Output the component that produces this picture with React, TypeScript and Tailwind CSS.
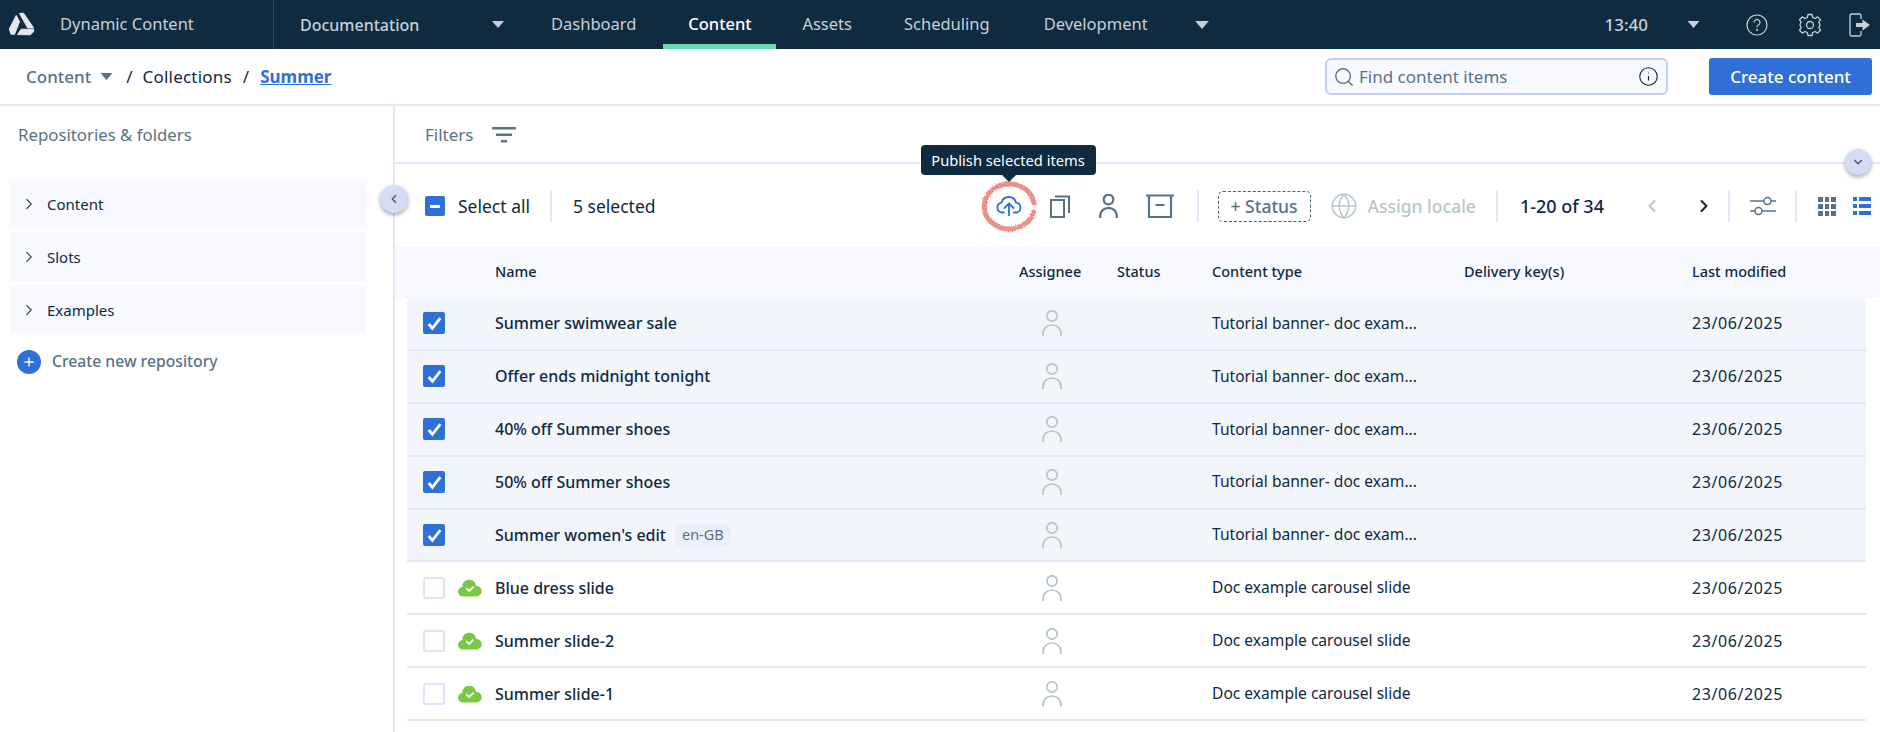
import React from "react";
import { ChevronLeft, ChevronRight, ChevronDown, Search, Info, Globe, Plus } from "lucide-react";

interface Row {
  name: string;
  type: string;
  selected: boolean;
  chip?: string;
}

const rows: Row[] = [
  { name: "Summer swimwear sale", type: "Tutorial banner- doc exam...", selected: true },
  { name: "Offer ends midnight tonight", type: "Tutorial banner- doc exam...", selected: true },
  { name: "40% off Summer shoes", type: "Tutorial banner- doc exam...", selected: true },
  { name: "50% off Summer shoes", type: "Tutorial banner- doc exam...", selected: true },
  { name: "Summer women's edit", type: "Tutorial banner- doc exam...", selected: true, chip: "en-GB" },
  { name: "Blue dress slide", type: "Doc example carousel slide", selected: false },
  { name: "Summer slide-2", type: "Doc example carousel slide", selected: false },
  { name: "Summer slide-1", type: "Doc example carousel slide", selected: false },
];

const Caret = ({ className }: { className: string }) => (
  <svg viewBox="0 0 12 7" className={className} fill="currentColor">
    <path d="M0 0h12L6 7z" />
  </svg>
);

const Logo = () => (
  <svg viewBox="22 18 82 75" className="w-[27px] h-[25px] -mt-[2px]" fill="#e4e9ee" stroke="#e4e9ee" strokeWidth="3" strokeLinejoin="round">
    <path d="M57 25L69 24L100 69L82 69Z" />
    <path d="M47 31L57 50L42 88L31 88L26 72Z" />
    <path d="M51 89L62 73L100 73L100 80L90 90Z" />
  </svg>
);

const PersonIcon = ({ className, stroke }: { className: string; stroke: number }) => (
  <svg viewBox="0 0 20 26" className={className} fill="none" stroke="currentColor" strokeWidth={stroke}>
    <circle cx="10" cy="6" r="5.200" />
    <path d="M1 26v-2.500a9 8.500 0 0 1 18 0V26" />
  </svg>
);

const Cloud = () => (
  <svg viewBox="0 0 24 18" className="w-[24px] h-[18px] ml-[13px]">
    <path fill="#7ac943" d="M5 17.500a4.700 4.700 0 0 1-.6-9.400A6.500 6.500 0 0 1 12 .800a6.500 6.500 0 0 1 6 6.300 5.200 5.200 0 0 1 1 10.400z" />
    <path fill="none" stroke="#fff" strokeWidth="1.800" strokeLinecap="round" strokeLinejoin="round" d="M8.800 9.800l2.300 2.200 4-3.800" />
  </svg>
);

const CheckBox = ({ checked }: { checked: boolean }) =>
  checked ? (
    <span className="w-[22px] h-[22px] rounded-[2px] bg-[#2f6fd8] flex items-center justify-center">
      <svg viewBox="0 0 16 16" className="w-[17px] h-[17px]" fill="none" stroke="#fff" strokeWidth="2.600">
        <path d="M2.500 8.500l3.500 4 7.500-9.500" />
      </svg>
    </span>
  ) : (
    <span className="w-[22px] h-[22px] rounded-[2px] bg-white border-[2px] border-[#dfe4f8]" />
  );

const Divider = ({ className }: { className: string }) => (
  <span className={`block w-[2px] h-[32px] shrink-0 bg-[#e3e8f8] ${className}`} />
);

const grid = "grid grid-cols-[88px_524px_98px_95px_252px_228px_1fr] items-center";

export default function App() {
  return (
    <div className="w-[1880px] h-[732px] overflow-hidden bg-white flex flex-col text-[16px] text-[#10293f] font-['Noto_Sans',sans-serif]">
      {/* Top nav */}
      <header className="h-[49px] bg-[#0f2b40] text-[#c6d0d8] text-[16.500px] flex items-center shrink-0">
        <div className="w-[274px] h-full flex items-center pl-[8px] border-r border-[#34495c]">
          <Logo />
          <span className="ml-[25px]">Dynamic Content</span>
        </div>
        <span className="ml-[26px] font-medium w-[192px] text-[16px]">Documentation</span>
        <Caret className="w-[12px] h-[7px] text-[#c6d0d8]" />
        <nav className="flex h-full ml-[47px]">
          <span className="h-full flex items-center">Dashboard</span>
          <span className="h-full w-[113px] ml-[27px] flex items-center justify-center text-white font-medium border-b-[5px] border-[#66dcb0] pt-[5px]">
            Content
          </span>
          <span className="h-full flex items-center ml-[26px]">Assets</span>
          <span className="h-full flex items-center ml-[52px]">Scheduling</span>
          <span className="h-full flex items-center ml-[54px]">Development</span>
          <span className="h-full flex items-center ml-[47px]">
            <Caret className="w-[14px] h-[8px]" />
          </span>
        </nav>
        <span className="ml-auto font-medium text-[17px]">13:40</span>
        <Caret className="w-[13px] h-[7px] ml-[39px]" />
        <svg viewBox="0 0 22 22" className="w-[22px] h-[22px] ml-[46px]" fill="none" stroke="currentColor" strokeWidth="1.200">
          <circle cx="11" cy="11" r="10" />
          <path d="M8 8.500a3 3 0 1 1 4.500 2.600c-1 .6-1.500 1.200-1.500 2.400" />
          <circle cx="11" cy="16" r=".5" />
        </svg>
        <svg viewBox="0 0 24 24" className="w-[24px] h-[24px] ml-[30px]" fill="none" stroke="currentColor" strokeWidth="1.300" strokeLinejoin="round">
          <circle cx="12" cy="12" r="3.500" />
          <path d="M10 1.500h4l.7 3 2.300 1 2.700-1.600 2.800 2.800L20.900 9.400l1 2.300 .1 .3-.1 .3-1 2.300 1.600 2.700-2.800 2.800-2.700-1.600-2.300 1-.7 3h-4l-.7-3-2.300-1-2.700 1.600-2.800-2.800 1.600-2.700-1-2.300-.1-.6 .1 -.3 1-2.300L1.500 6.700l2.800-2.800L7 5.500l2.300-1z" />
        </svg>
        <svg viewBox="0 0 22 24" className="w-[22px] h-[24px] ml-[27px] mr-[9px]" fill="none" stroke="currentColor" strokeWidth="1.300">
          <path d="M12 6V2.500a1.500 1.500 0 0 0-1.500-1.500H2.500A1.500 1.500 0 0 0 1 2.500v19A1.500 1.500 0 0 0 2.500 23h8a1.500 1.500 0 0 0 1.500-1.500V18" />
          <path fill="currentColor" stroke="none" d="M7 10h6.500V6.500L21 12l-7.500 5.500V14H7z" />
        </svg>
      </header>

      {/* Breadcrumb bar */}
      <div className="h-[57px] shrink-0 flex items-center border-b-[2px] border-[#e3e8f8] pl-[26px] pr-[8px] text-[17px]">
        <span className="text-[#5b7282] font-medium">Content</span>
        <Caret className="w-[13px] h-[7px] text-[#5b7282] ml-[9px]" />
        <span className="ml-[13px]">/</span>
        <span className="ml-[10px] tracking-[0.2px]">Collections</span>
        <span className="ml-[11px]">/</span>
        <span className="ml-[11px] text-[#2f6fd8] font-bold underline">Summer</span>
        <div className="ml-auto w-[343px] h-[37px] rounded-[6px] bg-[#f7f9fe] border-[2px] border-[#c3d0f3] flex items-center pl-[6px] pr-[7px] text-[#5b7282]">
          <Search className="w-[22px] h-[22px]" strokeWidth={1.500} />
          <span className="ml-[4px]">Find content items</span>
          <Info className="w-[21px] h-[21px] ml-auto text-[#10293f]" strokeWidth={1.300} />
        </div>
        <button className="ml-[41px] w-[163px] h-[37px] rounded-[3px] bg-[#2f6fd8] text-white font-medium">
          Create content
        </button>
      </div>

      <div className="flex flex-1 min-h-0">
        {/* Sidebar */}
        <aside className="w-[395px] shrink-0 border-r-[2px] border-[#e3e8f8] relative">
          <div className="h-[58px] flex items-center pl-[18px] text-[#5b7282] text-[16.800px]">Repositories &amp; folders</div>
          <div className="mt-[15px] pl-[9px] pr-[26px] flex flex-col gap-[3px]">
            {["Content", "Slots", "Examples"].map((item) => (
              <div key={item} className="h-[50px] bg-[#f7f9fe] flex items-center pl-[11px] text-[15px]">
                <ChevronRight className="w-[18px] h-[18px] text-[#3a5263]" strokeWidth={1.600} />
                <span className="ml-[9px]">{item}</span>
              </div>
            ))}
          </div>
          <div className="mt-[15px] pl-[17px] flex items-center text-[#5b7282] font-medium text-[15.700px]">
            <span className="w-[24px] h-[24px] rounded-full bg-[#2f6fd8] flex items-center justify-center">
              <Plus className="w-[14px] h-[14px] text-white" strokeWidth={2.500} />
            </span>
            <span className="ml-[11px]">Create new repository</span>
          </div>
          <span className="absolute left-[380px] top-[79px] w-[28px] h-[28px] rounded-full bg-[#d5dcf4] shadow-[0_2px_4px_rgba(15,43,64,0.4)] flex items-center justify-center">
            <ChevronLeft className="w-[14px] h-[14px] text-[#3a5263]" strokeWidth={2} />
          </span>
        </aside>

        {/* Main */}
        <main className="flex-1 min-w-0 flex flex-col relative">
          <div className="h-[58px] shrink-0 flex items-center pl-[30px] pt-[1px] border-b-[2px] border-[#e3e8f8] text-[#5b7282] text-[17px]">
            <span>Filters</span>
            <svg viewBox="0 0 24 16" className="w-[24px] h-[16px] ml-[19px]" fill="currentColor">
              <path d="M0 0h24v2.500H0zM4 6.500h16V9H4zM9 13h6v2.500H9z" />
            </svg>
          </div>

          {/* Toolbar */}
          <div className="h-[82px] shrink-0 flex items-center pl-[30px] pt-[2px] text-[#5b7282] text-[17.500px]">
            <span className="w-[20px] h-[20px] rounded-[2px] bg-[#2f6fd8] flex items-center justify-center shrink-0">
              <span className="w-[10px] h-[3px] bg-white" />
            </span>
            <span className="ml-[13px] text-[#10293f] whitespace-nowrap">Select all</span>
            <Divider className="ml-[20px] h-[26px]" />
            <span className="ml-[21px] text-[#10293f] whitespace-nowrap">5 selected</span>

            {/* Publish icon with ring and tooltip */}
            <span className="relative ml-[340px] w-[26px] h-[20px] shrink-0">
              <svg viewBox="0 0 26 20" className="w-[26px] h-[20px]" fill="none" stroke="#2f6fd8" strokeWidth="1.800" strokeLinecap="round" strokeLinejoin="round">
                <path d="M8 16.500H6a5 5 0 0 1-.5-9.900A7.500 7.500 0 0 1 20 6.600a5 5 0 0 1 .3 9.900H18" />
                <path d="M13 20V8M8.500 12L13 7.500l4.500 4.500" />
              </svg>
              <svg viewBox="0 0 56 50" className="absolute -left-[15px] -top-[14px] w-[56px] h-[50px] overflow-visible" fill="none" stroke="#ea918a" strokeWidth="5" strokeLinecap="round">
                <filter id="rough">
                  <feTurbulence type="fractalNoise" baseFrequency="0.7" numOctaves="2" />
                  <feDisplacementMap in="SourceGraphic" scale="3" />
                </filter>
                <path filter="url(#rough)" d="M53 21A25 22.500 0 1 0 52.500 30" />
              </svg>
              <span className="absolute -left-[75px] -top-[51px] w-[175px] h-[30px] rounded-[4px] bg-[#0f2b40] text-white text-[14.700px] flex items-center justify-center whitespace-nowrap">
                Publish selected items
              </span>
              <span className="absolute left-[6px] -top-[21px] w-0 h-0 border-x-[7px] border-x-transparent border-t-[7px] border-t-[#0f2b40]" />
            </span>

            <svg viewBox="0 0 20 24" className="w-[20px] h-[24px] ml-[28px] shrink-0" fill="none" stroke="currentColor" strokeWidth="2">
              <rect x="1" y="6" width="13" height="17" />
              <path d="M5 2.500h14V19" />
            </svg>
            <PersonIcon className="w-[19px] h-[24px] ml-[29px] shrink-0 text-[#5b7282]" stroke={2.400} />
            <svg viewBox="0 0 28 24" className="w-[28px] h-[24px] ml-[28px] shrink-0" fill="none" stroke="currentColor" strokeWidth="2.200">
              <path d="M0 1.500h28M3 1.500V23h22V1.500M9.500 11h9" />
            </svg>
            <Divider className="ml-[23px]" />
            <span className="ml-[19px] w-[93px] h-[31px] shrink-0 rounded-[5px] border border-dashed border-[#4a5f6e] flex items-center justify-center font-medium whitespace-nowrap">
              + Status
            </span>
            <Globe className="w-[28px] h-[28px] ml-[19px] shrink-0 text-[#b7c6cc]" strokeWidth={1.300} />
            <span className="ml-[10px] font-medium text-[#b7c6cc] whitespace-nowrap">Assign locale</span>
            <Divider className="ml-[20px]" />
            <span className="ml-[22px] font-medium text-[#10293f] whitespace-nowrap text-[18px]">1-20 of 34</span>
            <ChevronLeft className="w-[20px] h-[20px] ml-[38px] shrink-0 text-[#b7c6cc]" strokeWidth={2.500} />
            <ChevronRight className="w-[20px] h-[20px] ml-[32px] shrink-0 text-[#10293f]" strokeWidth={2.500} />
            <Divider className="ml-[14px]" />
            <svg viewBox="0 0 26 20" className="w-[26px] h-[20px] ml-[20px] shrink-0" fill="none" stroke="currentColor" strokeWidth="1.500">
              <path d="M0 5h14M21 5h5M0 15h5M12 15h14" />
              <circle cx="17.500" cy="5" r="3.500" />
              <circle cx="8.500" cy="15" r="3.500" />
            </svg>
            <Divider className="ml-[19px]" />
            <span className="ml-[21px] grid grid-cols-3 gap-[2px] w-[18px] shrink-0">
              {Array.from({ length: 9 }).map((_, i) => (
                <span key={i} className="h-[5px] bg-[#5b7282]" />
              ))}
            </span>
            <span className="ml-[17px] w-[18px] shrink-0 flex flex-col gap-[3px]">
              {[0, 1, 2].map((i) => (
                <span key={i} className="flex gap-[2px] h-[4px]">
                  <span className="w-[4px] bg-[#2f6fd8]" />
                  <span className="flex-1 bg-[#2f6fd8]" />
                </span>
              ))}
            </span>
          </div>

          <span className="absolute right-[9px] top-[43px] w-[26px] h-[26px] rounded-full bg-[#d5dcf4] shadow-[0_2px_4px_rgba(15,43,64,0.4)] flex items-center justify-center">
            <ChevronDown className="w-[14px] h-[14px] text-[#3a5263]" strokeWidth={2} />
          </span>

          {/* Table header */}
          <div className={`h-[52px] shrink-0 bg-[#f7f9fe] pl-[12px] pb-[1px] text-[14.500px] font-medium ${grid}`}>
            <span />
            <span>Name</span>
            <span>Assignee</span>
            <span>Status</span>
            <span>Content type</span>
            <span>Delivery key(s)</span>
            <span>Last modified</span>
          </div>

          {/* Table rows */}
          <div className="ml-[12px] mr-[14px]">
            {rows.map((row) => (
              <div
                key={row.name}
                className={`h-[52.900px] border-b-[2px] border-[#e3e8f8] ${grid} ${row.selected ? "bg-[#f2f6fb]" : "bg-white"}`}
              >
                <div className="flex items-center pl-[16px]">
                  <CheckBox checked={row.selected} />
                  {!row.selected && <Cloud />}
                </div>
                <div className="flex items-center font-medium">
                  <span>{row.name}</span>
                  {row.chip && (
                    <span className="ml-[9px] h-[23px] px-[7px] rounded-[6px] bg-[#eaeffa] text-[#5b7282] text-[14.500px] font-normal flex items-center">
                      {row.chip}
                    </span>
                  )}
                </div>
                <div className="pl-[23px]">
                  <PersonIcon className="w-[20px] h-[26px] text-[#b7c6cc]" stroke={1.700} />
                </div>
                <span />
                <span className="text-[15.600px]">{row.type}</span>
                <span />
                <span className="tracking-[0.6px]">23/06/2025</span>
              </div>
            ))}
          </div>
        </main>
      </div>
    </div>
  );
}
